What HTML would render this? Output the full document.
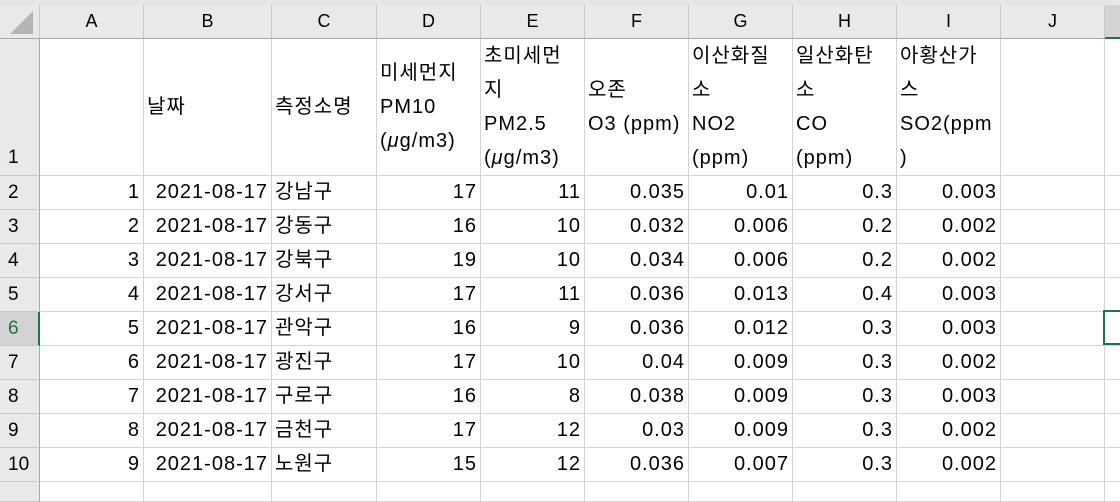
<!DOCTYPE html>
<html><head><meta charset="utf-8"><style>
*{margin:0;padding:0;box-sizing:border-box}
body{width:1120px;height:482px;overflow:hidden;background:#fff;font-family:"Liberation Sans","Noto Sans CJK KR",sans-serif;font-size:20px;letter-spacing:1px;color:#000;position:relative}
.top{position:absolute;left:0;top:0;width:1120px;height:5px;background:#e6e6e6}
.g{position:absolute;left:0;top:5px;display:grid;grid-template-columns:40px 104px 128px 105px 104px 104px 104px 104px 104px 104px 104px 30px;grid-template-rows:34px 137px repeat(9,34px) 20px}
.g>div{border-right:1px solid #d4d4d4;border-bottom:1px solid #d4d4d4;overflow:hidden;white-space:nowrap;padding:0 3px;line-height:33px;display:flex;align-items:center}
.n{justify-content:flex-end}
.h{background:#e9e9e9;border-color:#c8c8c8 !important;border-bottom-color:#a8a8a8 !important;justify-content:center;font-size:18px;letter-spacing:0}
.rh{background:#e9e9e9;border-color:#c8c8c8 !important;border-right-color:#a8a8a8 !important;padding-left:8px !important;font-size:19px;letter-spacing:0}
.r1{line-height:34px !important}
.r1 span{display:block;white-space:nowrap}
.r1.rh{align-items:flex-end}
.sel{background:#d3d3d3 !important;color:#217346;border-right:2px solid #217346 !important}
.ks{background:#d3d3d3 !important;border-bottom:2px solid #217346 !important}
.cur{position:absolute;left:1103px;top:310px;width:20px;height:35px;border:2px solid #217346}
.corner{position:relative}
</style></head><body>
<div class="top"></div>
<div class="g">
<div class="h corner"><svg width="30" height="30" style="position:absolute;left:6px;top:2px"><polygon points="27,4 27,27 4,27" fill="#b4b4b4"/></svg></div><div class="h">A</div><div class="h">B</div><div class="h">C</div><div class="h">D</div><div class="h">E</div><div class="h">F</div><div class="h">G</div><div class="h">H</div><div class="h">I</div><div class="h">J</div><div class="h ks"></div>
<div class="rh r1">1</div><div class="r1"></div><div class="r1"><span>날짜</span></div><div class="r1"><span>측정소명</span></div><div class="r1"><span>미세먼지<br>PM10<br>(<i>μ</i>g/m3)</span></div><div class="r1"><span>초미세먼<br>지<br>PM2.5<br>(<i>μ</i>g/m3)</span></div><div class="r1"><span>오존<br>O3 (ppm)</span></div><div class="r1"><span>이산화질<br>소<br>NO2<br>(ppm)</span></div><div class="r1"><span>일산화탄<br>소<br>CO<br>(ppm)</span></div><div class="r1"><span>아황산가<br>스<br>SO2(ppm<br>)</span></div><div class="r1"></div><div class="r1"></div>
<div class="rh">2</div><div class="n">1</div><div class="n">2021-08-17</div><div>강남구</div><div class="n">17</div><div class="n">11</div><div class="n">0.035</div><div class="n">0.01</div><div class="n">0.3</div><div class="n">0.003</div><div></div><div></div>
<div class="rh">3</div><div class="n">2</div><div class="n">2021-08-17</div><div>강동구</div><div class="n">16</div><div class="n">10</div><div class="n">0.032</div><div class="n">0.006</div><div class="n">0.2</div><div class="n">0.002</div><div></div><div></div>
<div class="rh">4</div><div class="n">3</div><div class="n">2021-08-17</div><div>강북구</div><div class="n">19</div><div class="n">10</div><div class="n">0.034</div><div class="n">0.006</div><div class="n">0.2</div><div class="n">0.002</div><div></div><div></div>
<div class="rh">5</div><div class="n">4</div><div class="n">2021-08-17</div><div>강서구</div><div class="n">17</div><div class="n">11</div><div class="n">0.036</div><div class="n">0.013</div><div class="n">0.4</div><div class="n">0.003</div><div></div><div></div>
<div class="rh sel">6</div><div class="n">5</div><div class="n">2021-08-17</div><div>관악구</div><div class="n">16</div><div class="n">9</div><div class="n">0.036</div><div class="n">0.012</div><div class="n">0.3</div><div class="n">0.003</div><div></div><div></div>
<div class="rh">7</div><div class="n">6</div><div class="n">2021-08-17</div><div>광진구</div><div class="n">17</div><div class="n">10</div><div class="n">0.04</div><div class="n">0.009</div><div class="n">0.3</div><div class="n">0.002</div><div></div><div></div>
<div class="rh">8</div><div class="n">7</div><div class="n">2021-08-17</div><div>구로구</div><div class="n">16</div><div class="n">8</div><div class="n">0.038</div><div class="n">0.009</div><div class="n">0.3</div><div class="n">0.003</div><div></div><div></div>
<div class="rh">9</div><div class="n">8</div><div class="n">2021-08-17</div><div>금천구</div><div class="n">17</div><div class="n">12</div><div class="n">0.03</div><div class="n">0.009</div><div class="n">0.3</div><div class="n">0.002</div><div></div><div></div>
<div class="rh">10</div><div class="n">9</div><div class="n">2021-08-17</div><div>노원구</div><div class="n">15</div><div class="n">12</div><div class="n">0.036</div><div class="n">0.007</div><div class="n">0.3</div><div class="n">0.002</div><div></div><div></div>
<div class="rh"></div><div></div><div></div><div></div><div></div><div></div><div></div><div></div><div></div><div></div><div></div><div></div>
</div>
<div class="cur"></div>
</body></html>
